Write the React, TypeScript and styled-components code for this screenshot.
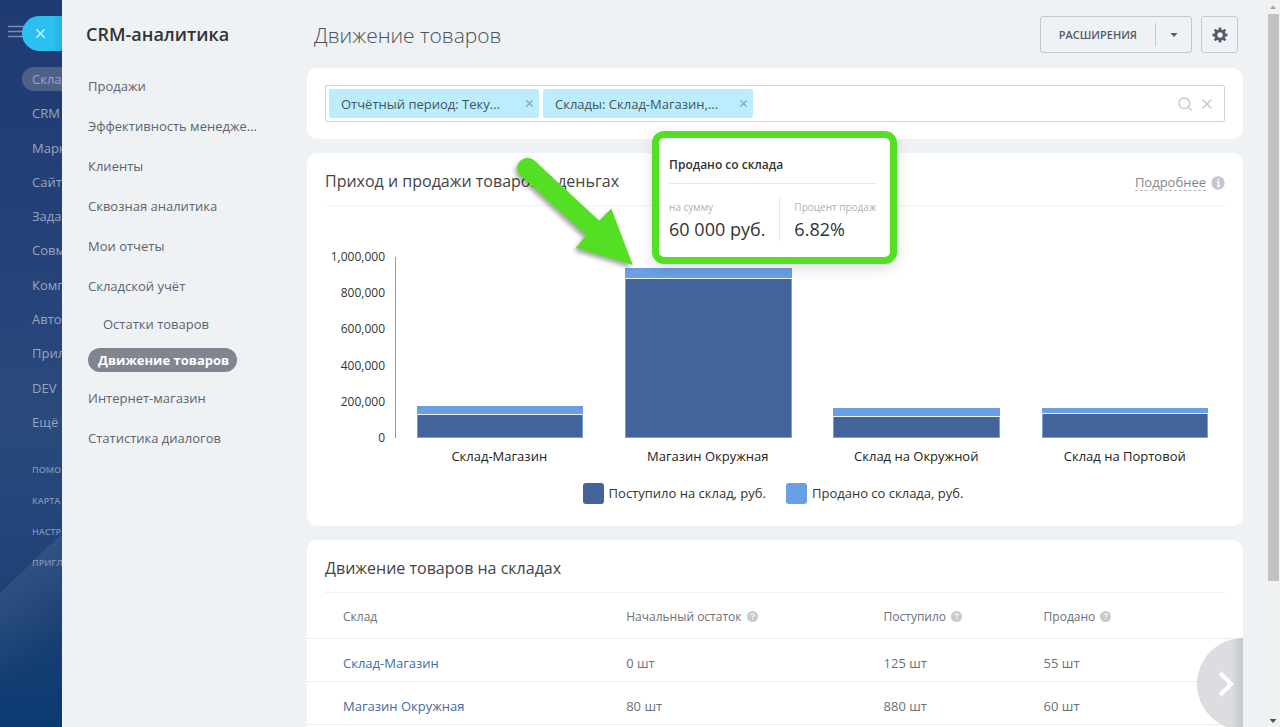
import React from "react";
import styled, { createGlobalStyle } from "styled-components";
import { Search, X } from "lucide-react";

const GlobalStyle = createGlobalStyle`
  *, *::before, *::after { box-sizing: border-box; }
  body {
    margin: 0;
    background: #eef2f4;
    font-family: "Open Sans", "Noto Sans", sans-serif;
    font-size: 13px;
    color: #333;
  }
  button, input { font: inherit; color: inherit; }
  ul { list-style: none; margin: 0; padding: 0; }
  h1, h2, h3, p, dl, dd { margin: 0; font-weight: 400; }
  a { color: inherit; text-decoration: none; }
`;

const IconButton = styled.button`
  display: flex;
  align-items: center;
  justify-content: center;
  padding: 0;
  border: 0;
  background: none;
  cursor: pointer;
`;

const Shell = styled.div`
  display: flex;
  height: 100vh;
  overflow: hidden;
`;

/* ---------- portal rail ---------- */

const Rail = styled.aside`
  position: relative;
  flex: 0 0 62px;
  overflow: hidden;
  color: #98a5be;
  background:
    linear-gradient(136deg, transparent 0 50%, rgba(110, 140, 170, 0.2) 50%, transparent 78%) 0 409px / 100px 272px no-repeat,
    linear-gradient(180deg, #203a73 0%, #244078 30%, #2a4a7c 58%, #22447a 74%, #1c4074 84%, #0a3a72 100%);
`;

const MenuToggle = styled(IconButton)`
  display: block;
  margin: 24px 0 0 8px;
  height: 13px;
`;

const CloseTab = styled(IconButton)`
  position: absolute;
  top: 16px;
  right: 0;
  width: 40px;
  height: 35px;
  padding-right: 3px;
  border-radius: 18px 0 0 18px;
  background: linear-gradient(90deg, #2cc0f2 75%, #25aee2);
  color: #d8f4fd;
`;

const RailMenu = styled.ul`
  display: flex;
  flex-direction: column;
  justify-content: space-between;
  height: 367px;
  margin: 30px 0 0 22px;
`;

const RailLink = styled.a<{ $active?: boolean }>`
  display: block;
  padding-left: 10px;
  border-radius: 12px 0 0 12px;
  line-height: 24px;
  white-space: nowrap;
  background: ${(p) => (p.$active ? "#4f6088" : "transparent")};
`;

const RailFooter = styled.ul`
  margin: 20px 0 0 32px;
  font-size: 9px;
  font-weight: 600;
  line-height: 31px;
  color: #7f90ae;
  text-transform: uppercase;
  white-space: nowrap;
`;

/* ---------- section menu ---------- */

const SideMenu = styled.nav`
  flex: 0 0 245px;
  min-width: 0;
  padding: 20px 24px 0;
`;

const SideTitle = styled.h2`
  margin-bottom: 18px;
  font-size: 18px;
  font-weight: 600;
  line-height: 28px;
`;

const SideItem = styled.li`
  padding-left: 2px;
  line-height: 40px;
  color: #5d646e;
  white-space: nowrap;
`;

const SubItem = styled.li`
  display: flex;
  align-items: center;
  height: 36px;
  padding-left: 2px;
  color: #5d646e;
`;

const SubLink = styled.a<{ $active?: boolean }>`
  padding: 0 ${(p) => (p.$active ? "8px" : "0")} 0 ${(p) => (p.$active ? "10px" : "15px")};
  border-radius: 12px;
  line-height: 24px;
  font-weight: ${(p) => (p.$active ? 700 : 400)};
  color: ${(p) => (p.$active ? "#fff" : "inherit")};
  background: ${(p) => (p.$active ? "#80858f" : "transparent")};
`;

/* ---------- content ---------- */

const Main = styled.main`
  flex: 1;
  min-width: 0;
  display: flex;
  flex-direction: column;
  gap: 14px;
  padding: 16px 24px 0 0;
`;

const Header = styled.header`
  flex: none;
  display: flex;
  align-items: center;
  gap: 9px;
  height: 38px;
  padding: 0 5px 1px 7px;
`;

const PageTitle = styled.h1`
  flex: 1;
  font-size: 21px;
  font-weight: 300;
  color: #4c515b;
`;

const OutlineGroup = styled.div`
  display: flex;
  align-items: center;
  height: 37px;
  border: 1px solid #c3c9d0;
  border-radius: 3px;
  color: #535c69;
`;

const ExtensionsButton = styled(IconButton)`
  height: 23px;
  padding: 0 18px;
  border-right: 1px solid #c3c9d0;
  font-size: 11px;
  font-weight: 600;
`;

const CaretButton = styled(IconButton)`
  width: 35px;
  height: 35px;
`;

const Card = styled.section`
  position: relative;
  flex: none;
  border-radius: 10px;
  background: #fff;
`;

const FilterCard = styled(Card)`
  padding: 17px 18px;
`;

const TableCard = styled(Card)`
  padding-bottom: 24px;
`;

const FilterBox = styled.div`
  display: flex;
  align-items: center;
  gap: 4px;
  height: 37px;
  padding: 3px 8px 3px 3px;
  border: 1px solid #cfd4d8;
  border-radius: 2px;
`;

const Chip = styled.span`
  display: flex;
  align-items: center;
  justify-content: space-between;
  width: 210px;
  height: 29px;
  padding: 0 4px 0 12px;
  border-radius: 2px;
  background: #bcedfc;
  color: #3f5560;
  white-space: nowrap;
`;

const ChipRemove = styled(IconButton)`
  width: 12px;
  height: 12px;
  color: #86abb8;
`;

const FilterInput = styled.input`
  flex: 1;
  min-width: 0;
  height: 27px;
  border: 0;
  outline: 0;
  background: transparent;
`;

const FilterAction = styled(IconButton)`
  width: 18px;
  height: 18px;
  color: #c0c5ca;
`;

const CardHead = styled.div`
  display: flex;
  align-items: center;
  justify-content: space-between;
  height: 53px;
  margin: 0 18px;
  padding-top: 3px;
  border-bottom: 1px solid #eff1f2;
`;

const CardTitle = styled.h2`
  font-size: 16px;
  color: #444;
`;

const DetailsLink = styled.a`
  display: flex;
  align-items: center;
  gap: 5px;
  padding-top: 4px;
  color: #80868e;
  span {
    border-bottom: 1px dashed #b5bac0;
    line-height: 16px;
  }
`;

/* ---------- chart ---------- */

const ChartArea = styled.div`
  display: flex;
  gap: 10px;
  padding: 43px 14px 0 18px;
`;

const YAxis = styled.ul`
  display: flex;
  flex-direction: column;
  justify-content: space-between;
  width: 60px;
  height: 197px;
  font-size: 12px;
  line-height: 16px;
  text-align: right;
`;

const Plot = styled.div`
  flex: 1;
  padding-top: 8px;
`;

const Bars = styled.div`
  display: flex;
  height: 181px;
  border-left: 1px solid #999;
`;

const Slot = styled.div`
  flex: 1;
  display: flex;
  align-items: flex-end;
  justify-content: center;
`;

const Stack = styled.div`
  position: relative;
  display: flex;
  flex-direction: column;
  justify-content: flex-end;
  width: 80%;
  height: 100%;
`;

const SoldBar = styled.div`
  background: #6a9fe4;
  border-bottom: 1px solid #eaf1fb;
`;

const ReceivedBar = styled.div`
  background: #43649a;
  border: 1px solid #7ba0d4;
  border-top: 0;
`;

const Categories = styled.ul`
  display: flex;
  padding-top: 8px;
  li {
    flex: 1;
    line-height: 20px;
    text-align: center;
    color: #222;
  }
`;

const Legend = styled.ul`
  display: flex;
  justify-content: center;
  gap: 20px;
  padding: 17px 4px 22px 0;
  li {
    display: flex;
    align-items: center;
    gap: 5px;
    line-height: 21px;
  }
`;

const Swatch = styled.span<{ $color: string }>`
  width: 21px;
  height: 21px;
  border-radius: 3px;
  background: ${(p) => p.$color};
`;

/* Anchored to the top of the highlighted column */
const Callout = styled.div`
  position: absolute;
  z-index: 2;
  left: 27px;
  bottom: 174px;
  width: 245px;
  height: 133px;
  padding: 16px 14px 0 10px;
  border: 7px solid #55df24;
  border-radius: 12px;
  background: #fff;
  box-shadow: 0 5px 14px rgba(0, 0, 0, 0.12);
`;

const CalloutTitle = styled.h3`
  padding-bottom: 7px;
  border-bottom: 1px solid #e8eaec;
  font-size: 12px;
  font-weight: 600;
  line-height: 22px;
`;

const Stats = styled.dl`
  display: flex;
  padding-top: 13px;
  white-space: nowrap;
  div + div {
    margin-left: 14px;
    padding-left: 14px;
    border-left: 1px solid #e8eaec;
  }
  dt {
    font-size: 10px;
    line-height: 20px;
    color: #adb0b5;
  }
  dd {
    font-size: 18px;
    line-height: 24px;
  }
`;

const Arrow = styled.svg`
  position: absolute;
  z-index: 2;
  left: -113px;
  bottom: 166px;
  filter: drop-shadow(-2px 3px 2px rgba(0, 0, 0, 0.35));
`;

/* ---------- table ---------- */

const Table = styled.table`
  width: 100%;
  border-collapse: collapse;
  table-layout: fixed;
  color: #6c7178;
  th, td {
    padding: 0;
    border-bottom: 1px solid #eceef0;
    text-align: left;
    font-weight: 400;
    white-space: nowrap;
  }
  th { height: 45px; padding-top: 2px; font-size: 12px; }
  td { height: 43px; padding-top: 7px; }
  th:first-child, td:first-child { padding-left: 36px; }
  a { color: #3e6ba8; }
`;

const HeadCell = styled.th<{ $width?: string }>`
  width: ${(p) => p.$width ?? "auto"};
  svg { margin-left: 5px; vertical-align: -1px; }
`;

const NextButton = styled(IconButton)`
  position: absolute;
  top: 98px;
  right: 0;
  width: 46px;
  height: 92px;
  padding-left: 12px;
  border-radius: 46px 0 0 46px;
  background: linear-gradient(90deg, rgba(206, 208, 212, 0.72) 75%, rgba(186, 188, 193, 0.85));
`;

/* ---------- scrollbar ---------- */

const ScrollTrack = styled.div`
  flex: 0 0 13px;
  display: flex;
  flex-direction: column;
  align-items: center;
  padding: 5px 1px 4px 0;
  background: #f0f1f1;
`;

const ScrollThumb = styled.div`
  flex: 0 1 79%;
  width: 11px;
  margin: 5px 0 auto;
  background: #c1c1c1;
`;

const railItems = [
  "Склад", "CRM", "Марк", "Сайт", "Задач", "Совм", "Комп", "Автом", "Прил", "DEV", "Ещё",
];
const railFooter = ["Помо", "Карта", "Настр", "Пригл"];
const sectionsTop = [
  "Продажи", "Эффективность менедже...", "Клиенты", "Сквозная аналитика",
  "Мои отчеты", "Складской учёт",
];
const sectionsBottom = ["Интернет-магазин", "Статистика диалогов"];
const ticks = ["1,000,000", "800,000", "600,000", "400,000", "200,000", "0"];
const columns = [
  { name: "Склад-Магазин", received: 125000, sold: 53000 },
  { name: "Магазин Окружная", received: 880000, sold: 60000 },
  { name: "Склад на Окружной", received: 118000, sold: 46000 },
  { name: "Склад на Портовой", received: 130000, sold: 36000 },
];
const rows = [
  ["Склад-Магазин", "0 шт", "125 шт", "55 шт"],
  ["Магазин Окружная", "80 шт", "880 шт", "60 шт"],
];
const share = (value: number) => `${value / 10000}%`;

const Gear = () => (
  <svg width="16" height="16" viewBox="0 0 16 16" fill="none" stroke="#525c69">
    <circle cx="8" cy="8" r="4.2" strokeWidth="3" />
    {[0, 45, 90, 135, 180, 225, 270, 315].map((a) => (
      <path key={a} d="M8 3V0.5" strokeWidth="2.6" transform={`rotate(${a} 8 8)`} />
    ))}
  </svg>
);

const Info = () => (
  <svg width="14" height="14" viewBox="0 0 14 14">
    <circle cx="7" cy="7" r="6.7" fill="#c3c7d0" />
    <path d="M6 6h1.6v4.2M5.8 10.4h3.2" stroke="#fff" strokeWidth="1.4" fill="none" />
    <circle cx="7" cy="3.6" r="1" fill="#fff" />
  </svg>
);

const Help = () => (
  <svg width="11" height="11" viewBox="0 0 11 11">
    <circle cx="5.5" cy="5.5" r="5.5" fill="#c6c9cd" />
    <path d="M3.9 4.3c0-2 3.3-2 3.3-.1 0 1.2-1.6 1.2-1.6 2.4M5.6 7.6v1.1" stroke="#fff" strokeWidth="1.1" fill="none" />
  </svg>
);

const Triangle = ({ up, color = "#505050" }: { up?: boolean; color?: string }) => (
  <svg width="8" height="4" viewBox="0 0 8 4">
    <path d={up ? "M1 4 4 0.5 7 4z" : "M0.5 0H7.5L4 4z"} fill={color} />
  </svg>
);

export default function App() {
  return (
    <>
      <GlobalStyle />
      <Shell>
        <Rail>
          <MenuToggle aria-label="Меню">
            <svg width="16" height="13" viewBox="0 0 16 13" stroke="#7f8daa" strokeWidth="1.4">
              <path d="M0 1.5H16M0 6.5H16M0 11.5H16" />
            </svg>
          </MenuToggle>
          <CloseTab aria-label="Закрыть"><X size={15} strokeWidth={2.2} /></CloseTab>
          <RailMenu>
            {railItems.map((t, i) => (
              <li key={t}><RailLink href="#" $active={i === 0}>{t}</RailLink></li>
            ))}
          </RailMenu>
          <RailFooter>
            {railFooter.map((t) => <li key={t}><a href="#">{t}</a></li>)}
          </RailFooter>
        </Rail>

        <SideMenu>
          <SideTitle>CRM-аналитика</SideTitle>
          <ul>
            {sectionsTop.map((t) => <SideItem key={t}><a href="#">{t}</a></SideItem>)}
            <SubItem><SubLink href="#">Остатки товаров</SubLink></SubItem>
            <SubItem><SubLink href="#" $active>Движение товаров</SubLink></SubItem>
            {sectionsBottom.map((t) => <SideItem key={t}><a href="#">{t}</a></SideItem>)}
          </ul>
        </SideMenu>

        <Main>
          <Header>
            <PageTitle>Движение товаров</PageTitle>
            <OutlineGroup>
              <ExtensionsButton>РАСШИРЕНИЯ</ExtensionsButton>
              <CaretButton aria-label="Ещё расширения"><Triangle color="#535c69" /></CaretButton>
            </OutlineGroup>
            <OutlineGroup>
              <CaretButton aria-label="Настройки"><Gear /></CaretButton>
            </OutlineGroup>
          </Header>

          <FilterCard>
            <FilterBox>
              {["Отчётный период: Теку...", "Склады: Склад-Магазин,..."].map((t) => (
                <Chip key={t}>
                  {t}
                  <ChipRemove aria-label="Убрать"><X size={11} strokeWidth={3} /></ChipRemove>
                </Chip>
              ))}
              <FilterInput aria-label="Фильтр" />
              <FilterAction aria-label="Найти"><Search size={16} strokeWidth={2} /></FilterAction>
              <FilterAction aria-label="Сбросить"><X size={16} strokeWidth={2} /></FilterAction>
            </FilterBox>
          </FilterCard>

          <Card>
            <CardHead>
              <CardTitle>Приход и продажи товаров в деньгах</CardTitle>
              <DetailsLink href="#"><span>Подробнее</span><Info /></DetailsLink>
            </CardHead>
            <ChartArea>
              <YAxis>{ticks.map((t) => <li key={t}>{t}</li>)}</YAxis>
              <Plot>
                <Bars>
                  {columns.map((c, i) => (
                    <Slot key={c.name}>
                      <Stack>
                        <SoldBar style={{ height: share(c.sold) }} />
                        <ReceivedBar style={{ height: share(c.received) }} />
                        {i === 1 && (
                          <>
                            <Arrow width="125" height="120" viewBox="512 152 125 120">
                              <path
                                d="M534.5 160.5 599.3 220.7 611.3 208.5 632.8 265 576 248 586 235.3 520.5 175.5A10 10 0 0 1 534.5 160.5z"
                                fill="#55df24"
                              />
                            </Arrow>
                            <Callout>
                              <CalloutTitle>Продано со склада</CalloutTitle>
                              <Stats>
                                <div><dt>на сумму</dt><dd>60 000 руб.</dd></div>
                                <div><dt>Процент продаж</dt><dd>6.82%</dd></div>
                              </Stats>
                            </Callout>
                          </>
                        )}
                      </Stack>
                    </Slot>
                  ))}
                </Bars>
                <Categories>{columns.map((c) => <li key={c.name}>{c.name}</li>)}</Categories>
              </Plot>
            </ChartArea>
            <Legend>
              <li><Swatch $color="#43649a" />Поступило на склад, руб.</li>
              <li><Swatch $color="#6a9fe4" />Продано со склада, руб.</li>
            </Legend>
          </Card>

          <TableCard>
            <CardHead><CardTitle>Движение товаров на складах</CardTitle></CardHead>
            <Table>
              <thead>
                <tr>
                  <HeadCell $width="34.1%">Склад</HeadCell>
                  <HeadCell $width="27.5%">Начальный остаток<Help /></HeadCell>
                  <HeadCell $width="17.1%">Поступило<Help /></HeadCell>
                  <HeadCell>Продано<Help /></HeadCell>
                </tr>
              </thead>
              <tbody>
                {rows.map(([name, ...cells]) => (
                  <tr key={name}>
                    <td><a href="#">{name}</a></td>
                    {cells.map((c) => <td key={c}>{c}</td>)}
                  </tr>
                ))}
              </tbody>
            </Table>
            <NextButton aria-label="Дальше">
              <svg width="18" height="28" viewBox="0 0 18 28" fill="none" stroke="#fff" strokeWidth="4">
                <path d="M3 3 14 14 3 25" />
              </svg>
            </NextButton>
          </TableCard>
        </Main>

        <ScrollTrack aria-hidden="true">
          <Triangle up color="#a0a0a0" />
          <ScrollThumb />
          <Triangle />
        </ScrollTrack>
      </Shell>
    </>
  );
}
